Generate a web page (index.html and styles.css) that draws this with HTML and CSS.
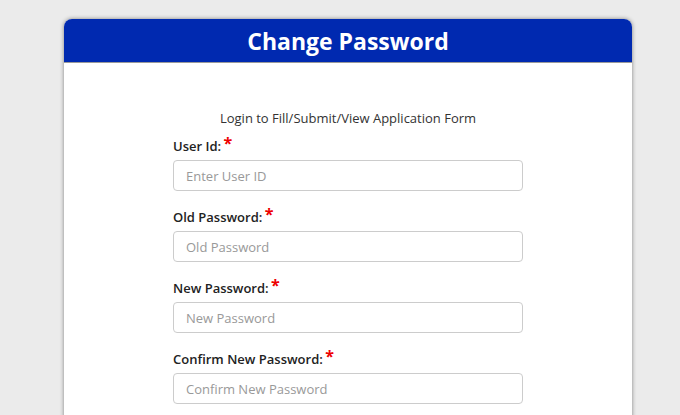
FILE: index.html
```html
<!DOCTYPE html>
<html lang="en">
<head>
  <meta charset="UTF-8">
  <meta name="viewport" content="width=device-width, initial-scale=1.0">
  <title>Change Password</title>
  <link rel="stylesheet" href="styles.css">
</head>
<body>
  <div class="card">
    <div class="card-header">
      <h1>Change Password</h1>
    </div>
    <div class="card-body">
      <p class="intro">Login to Fill/Submit/View Application Form</p>
      <form class="pw-form">
        <div class="field">
          <label for="userId">User Id: <span class="req">*</span></label>
          <input type="text" id="userId" placeholder="Enter User ID">
        </div>
        <div class="field">
          <label for="oldPw">Old Password: <span class="req">*</span></label>
          <input type="password" id="oldPw" placeholder="Old Password">
        </div>
        <div class="field">
          <label for="newPw">New Password: <span class="req">*</span></label>
          <input type="password" id="newPw" placeholder="New Password">
        </div>
        <div class="field">
          <label for="confirmPw">Confirm New Password: <span class="req">*</span></label>
          <input type="password" id="confirmPw" placeholder="Confirm New Password">
        </div>
      </form>
    </div>
  </div>
</body>
</html>
```

FILE: styles.css
```css
body {
  font-family: "Open Sans", Arial, sans-serif;
  margin: 0;
  padding: 19px 0 0 64px;
  background-color: #ebebeb;
  color: #222;
  overflow: hidden;
  height: 396px;
}
.card {
  width: 568px;
  background-color: #fff;
  border-radius: 8px 8px 0 0;
  box-shadow: 0 0 4px rgba(0, 0, 0, 0.45);
  height: 400px;
}
.card-header {
  background-color: #0029b0;
  border-radius: 8px 8px 0 0;
  height: 43px;
  border-bottom: 1px solid #9a9a9a;
  display: flex;
  align-items: center;
  justify-content: center;
}
.card-header h1 {
  margin: 0;
  color: #fff;
  font-size: 23px;
  font-weight: 700;
}
.card-body {
  padding: 46px 0 0 109px;
}
.intro {
  width: 350px;
  margin: 0 0 10px 0;
  text-align: center;
  font-size: 13px;
  line-height: 18px;
  color: #333;
}
.field {
  width: 350px;
  margin-bottom: 17px;
}
.field label {
  display: block;
  font-size: 13px;
  font-weight: 600;
  line-height: 18px;
  margin-bottom: 5px;
  color: #222;
}
.req {
  color: #e00;
  font-size: 16px;
  font-weight: 700;
  vertical-align: 2px;
  line-height: 0;
  margin-left: -1px;
}
.field input {
  display: block;
  box-sizing: border-box;
  width: 350px;
  height: 31px;
  padding: 0 12px;
  border: 1px solid #ccc;
  border-radius: 4px;
  font-family: "Open Sans", Arial, sans-serif;
  font-size: 13px;
  color: #333;
}
.field input::placeholder {
  color: #999;
}
```
